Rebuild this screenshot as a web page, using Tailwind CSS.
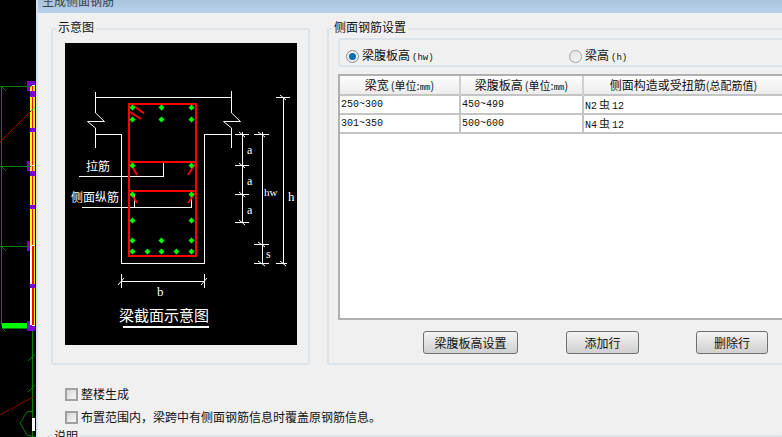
<!DOCTYPE html>
<html lang="zh">
<head>
<meta charset="utf-8">
<title>生成侧面钢筋</title>
<script src="https://cdn.jsdelivr.net/npm/@tailwindcss/browser@4"></script>
</head>
<body class="bg-black">
<div class="flex h-[437px] w-[782px] overflow-hidden font-['Noto_Sans_CJK_SC',sans-serif] text-[12px] leading-[14px] text-[#111]">
  <!-- CAD canvas -->
  <svg class="h-[437px] w-[36px] shrink-0 bg-black" viewBox="0 0 36 437" shape-rendering="crispEdges">
    <g fill="#7a00e0">
      <rect x="27" y="81" width="8" height="10"/><rect x="27" y="161" width="8" height="10"/><rect x="27" y="241" width="8" height="10"/><rect x="27" y="321" width="8" height="10"/>
    </g>
    <rect x="30" y="86" width="5" height="160" fill="#ffff00"/>
    <rect x="32" y="86" width="1" height="160" fill="#ff0000"/>
    <rect x="30" y="246" width="5" height="79" fill="#000"/>
    <rect x="30" y="246" width="2" height="79" fill="#ffffff"/>
    <rect x="32" y="246" width="2" height="79" fill="#ff0000"/>
    <rect x="34" y="246" width="1" height="79" fill="#ffff00"/>
    <g fill="#7a00e0">
      <rect x="30" y="91" width="5" height="6"/><rect x="30" y="128" width="5" height="4"/><rect x="30" y="171" width="5" height="5"/><rect x="30" y="205" width="5" height="4"/><rect x="30" y="284" width="5" height="4"/>
    </g>
    <rect x="32" y="85" width="3" height="1" fill="#fff"/><rect x="32" y="165" width="3" height="1" fill="#fff"/><rect x="32" y="245" width="3" height="1" fill="#fff"/><rect x="32" y="325" width="3" height="1" fill="#fff"/>
    <g fill="#008000">
      <rect x="1" y="86" width="1" height="240"/><rect x="0" y="86" width="31" height="1"/><rect x="0" y="166" width="31" height="1"/><rect x="0" y="246" width="28" height="1"/><rect x="2" y="328" width="26" height="1"/>
      <rect x="32" y="331" width="1" height="106"/>
    </g>
    <rect x="2" y="323" width="25" height="5" fill="#00ff00"/>
    <g shape-rendering="auto" fill="none">
      <path d="M0 142L32 110" stroke="#8b0000"/><path d="M0 415L35 396" stroke="#8b0000"/>
      <path d="M1 86L6 91M1 166L6 171M1 246L6 251M2 328L6 332M28 361L35 354M28 392L35 385" stroke="#008000"/>
      <path d="M34 411L27 412L20 423L27 435L36 437" stroke="#008000"/>
      <path d="M31 111L35 108" stroke="#00ff00"/>
    </g>
    <rect x="32" y="418" width="3" height="13" fill="#fff"/>
  </svg>

  <!-- Dialog -->
  <div class="flex h-[437px] min-w-0 flex-1 flex-col border-l-2 border-[#d3e3f3] bg-[#f0f0f0]">
    <div class="h-[13px] shrink-0 overflow-hidden bg-gradient-to-b from-[#a9c3dd] to-[#b9d1ea] pl-[4px] text-[#3a3f45]">
      <div class="-mt-[5px] leading-[12px]">生成侧面钢筋</div>
    </div>

    <div class="mt-[15px] flex h-[337px] shrink-0 pl-[13px]">
      <!-- diagram group -->
      <div class="relative h-[337px] w-[259px] shrink-0 rounded-[3px] border-2 border-[#dce4ea] pl-[12px] pt-[13px]">
        <span class="absolute -top-[10px] left-[3px] bg-[#f0f0f0] px-[2px]">示意图</span>
        <svg class="block h-[302px] w-[232px] bg-black" viewBox="65 43 232 302">
          <g fill="none" stroke="#fff" stroke-width="1" shape-rendering="crispEdges">
            <path d="M95.5 92V113M231.5 91V113M95.5 97.5H231.5M95.5 128V148M231.5 128V148"/>
            <path d="M95.5 134.5H121.5V263.5H204.5V134.5H231.5"/>
            <path d="M79 176.500H163.500V162M82 207.500H191.500V193M134.500 195V207"/>
            <path d="M242.500 132V223M235 134.500H249M235 165.500H249M235 194.500H249M235 222.500H249"/>
            <path d="M262.500 132V263M254 134.500H269M254 244.500H269M254 263.500H269"/>
            <path d="M283.500 97V263M276 97.500H290M276 263.500H287"/>
            <path d="M121.500 274V288M204.500 274V288M121.500 281.500H204.500"/>
          </g>
          <g fill="none" stroke="#fff" stroke-width="1">
            <path d="M95.500 113L104.500 121.500H87.500L95.500 128M231.500 113L240.500 121.500H223.500L231.500 128"/>
            <path d="M239 132L245 137M239 163L245 168M239 192L245 197M239 220L245 225M258 132L265 137M258 242L265 247M258 261L265 266M280 95L286 100M280 261L286 266M118 285L124 278M201 285L207 278"/>
          </g>
          <rect x="123" y="326" width="86" height="2" fill="#fff"/>
          <g fill="none" stroke="#ff0000" stroke-width="2" shape-rendering="crispEdges">
            <path d="M129 104H196V256H129ZM129 162H196M129 191H196"/>
          </g>
          <g fill="none" stroke="#ff0000" stroke-width="2">
            <path d="M134 106L144 113.500M130 112L141 119M131 164L137 175M195 164L188 175M131 193L137 203M195 193L188 203"/>
          </g>
          <g fill="#00ff00">
            <path d="M132.500 104.500l3 3-3 3-3-3zM161.500 104.500l3 3-3 3-3-3zM191.500 104.500l3 3-3 3-3-3zM132.500 116.500l3 3-3 3-3-3zM161.500 116.500l3 3-3 3-3-3zM191.500 116.500l3 3-3 3-3-3z"/>
            <path d="M132.500 162.500l3 3-3 3-3-3zM191.500 162.500l3 3-3 3-3-3zM132.500 191.500l3 3-3 3-3-3zM191.500 191.500l3 3-3 3-3-3z"/>
            <path d="M132.500 217.500l3 3-3 3-3-3zM191.500 217.500l3 3-3 3-3-3zM132.500 237.500l3 3-3 3-3-3zM161.500 237.500l3 3-3 3-3-3zM191.500 237.500l3 3-3 3-3-3z"/>
            <path d="M132.500 248.500l3 3-3 3-3-3zM147.500 248.500l3 3-3 3-3-3zM161.500 248.500l3 3-3 3-3-3zM176.500 248.500l3 3-3 3-3-3zM191.500 248.500l3 3-3 3-3-3z"/>
          </g>
          <g fill="#fff" font-size="12" font-family="'Noto Sans CJK SC',sans-serif">
            <text x="86" y="171">拉筋</text>
            <text x="71" y="202">侧面纵筋</text>
            <text x="119" y="321" font-size="15">梁截面示意图</text>
          </g>
          <g fill="#fff" font-size="12" font-family="'Liberation Serif',serif">
            <text x="247" y="154">a</text><text x="247" y="185">a</text><text x="247" y="214">a</text>
            <text x="264" y="196" font-size="11">hw</text><text x="288" y="201" font-size="13">h</text>
            <text x="266" y="258">s</text><text x="157" y="296" font-size="13">b</text>
          </g>
        </svg>
      </div>

      <!-- settings group -->
      <div class="relative ml-[17px] h-[337px] w-[480px] shrink-0 rounded-[3px] border-2 border-[#dce4ea] pl-[9px] pt-[8px]">
        <span class="absolute -top-[10px] left-[3px] bg-[#f0f0f0] px-[2px]">侧面钢筋设置</span>
        <div class="flex h-[29px] w-[460px] items-center rounded-[3px] border-2 border-[#dce4ea] pl-[6px] pt-[8px]">
          <span class="flex h-[13px] w-[13px] items-center justify-center rounded-full border border-[#8d8d8d] bg-[#ececec]"><span class="h-[7px] w-[7px] rounded-full bg-[#0a6fb0]"></span></span>
          <span class="ml-[3px] w-[207px]">梁腹板高<span class="ml-[2px] font-['Liberation_Mono',monospace] text-[9px]">(hw)</span></span>
          <span class="h-[13px] w-[13px] rounded-full border border-[#a5a5a5] bg-gradient-to-br from-[#e2e2e2] to-[#f6f6f6]"></span>
          <span class="ml-[3px]">梁高<span class="ml-[2px] font-['Liberation_Mono',monospace] text-[9px]">(h)</span></span>
        </div>
        <div class="mt-[7px] h-[246px] w-[460px] border-2 border-r-0 border-[#b0b0b0] bg-white">
          <div class="grid h-[20px] grid-cols-[121px_123px_1fr] border-b-2 border-[#c4c4c4] bg-gradient-to-b from-[#fefefe] to-[#ececec] text-center leading-[18px]">
            <div class="border-r-2 border-[#d0d0d0]">梁宽<span class="ml-[2px] text-[11px]">(单位:<span class="font-['Liberation_Mono',monospace] text-[9px]">mm</span>)</span></div>
            <div class="border-r-2 border-[#d0d0d0]">梁腹板高<span class="ml-[2px] text-[11px]">(单位:<span class="font-['Liberation_Mono',monospace] text-[9px]">mm</span>)</span></div>
            <div class="w-[199px]">侧面构造或受扭筋<span class="text-[11px]">(总配筋值)</span></div>
          </div>
          <div class="grid h-[19px] grid-cols-[121px_123px_1fr] border-b-2 border-[#c4c4c4] font-['Liberation_Mono',monospace] text-[10px] leading-[17px]">
            <div class="border-r-2 border-[#c4c4c4] pl-[1px]">250~300</div>
            <div class="border-r-2 border-[#c4c4c4] pl-[1px]">450~499</div>
            <div class="pl-[1px]">N2<span class="mx-[2px] font-['Noto_Sans_CJK_SC',sans-serif] text-[11px]">虫</span>12</div>
          </div>
          <div class="grid h-[19px] grid-cols-[121px_123px_1fr] border-b-2 border-[#c4c4c4] font-['Liberation_Mono',monospace] text-[10px] leading-[17px]">
            <div class="border-r-2 border-[#c4c4c4] pl-[1px]">301~350</div>
            <div class="border-r-2 border-[#c4c4c4] pl-[1px]">500~600</div>
            <div class="pl-[1px]">N4<span class="mx-[2px] font-['Noto_Sans_CJK_SC',sans-serif] text-[11px]">虫</span>12</div>
          </div>
        </div>
        <div class="mt-[11px] flex pl-[85px]">
          <button class="h-[23px] w-[95px] rounded-[3px] border border-[#707070] bg-gradient-to-b from-[#f4f4f4] to-[#cfcfcf]">梁腹板高设置</button>
          <button class="ml-[48px] h-[23px] w-[73px] rounded-[3px] border border-[#707070] bg-gradient-to-b from-[#f4f4f4] to-[#cfcfcf]">添加行</button>
          <button class="ml-[57px] h-[23px] w-[72px] rounded-[3px] border border-[#707070] bg-gradient-to-b from-[#f4f4f4] to-[#cfcfcf]">删除行</button>
        </div>
      </div>
    </div>

    <div class="mt-[22px] flex items-center pl-[27px]">
      <span class="h-[13px] w-[13px] border-2 border-[#a0a0a0] bg-gradient-to-br from-[#d8d8d8] to-[#f6f6f6]"></span>
      <span class="ml-[3px]">整楼生成</span>
    </div>
    <div class="mt-[9px] flex items-center pl-[27px]">
      <span class="h-[13px] w-[13px] border-2 border-[#a0a0a0] bg-gradient-to-br from-[#d8d8d8] to-[#f6f6f6]"></span>
      <span class="ml-[3px]">布置范围内，梁跨中有侧面钢筋信息时覆盖原钢筋信息。</span>
    </div>
    <div class="relative ml-[9px] mt-[11px] h-[20px] rounded-[3px] border-l-2 border-t-2 border-[#dce4ea]">
      <span class="absolute -top-[8px] left-[3px] bg-[#f0f0f0] px-[2px]">说明</span>
    </div>
  </div>
</div>
</body>
</html>
